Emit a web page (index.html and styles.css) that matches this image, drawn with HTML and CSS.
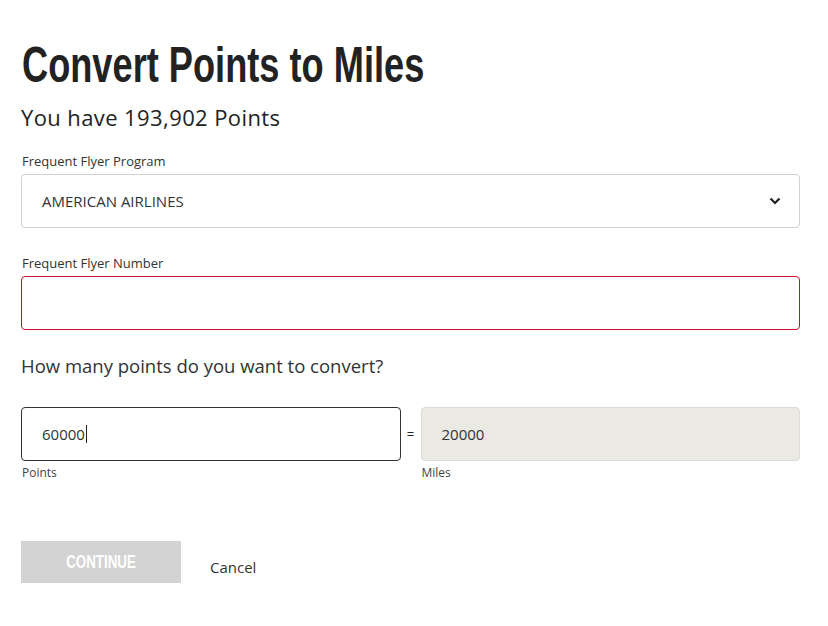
FILE: index.html
```html
<!DOCTYPE html>
<html lang="en">
<head>
    <meta charset="UTF-8">
    <meta name="viewport" content="width=device-width, initial-scale=1.0">
    <title>Convert Points to Miles</title>
    <link rel="stylesheet" href="styles.css">
</head>
<body>
    <div class="container">
        <h1><span>Convert Points to Miles</span></h1>
        <p class="balance">You have 193,902 Points</p>
        <form id="convert-form">
            <div class="form-group">
                <label for="program">Frequent Flyer Program</label>
                <div class="select-box">
                    <span>AMERICAN AIRLINES</span>
                    <svg width="12" height="8" viewBox="0 0 12 8"><path d="M1.5 1.5 L6 6 L10.5 1.5" fill="none" stroke="#222" stroke-width="2.2"/></svg>
                </div>
            </div>
            <div class="form-group">
                <label for="ff-number">Frequent Flyer Number</label>
                <input type="text" id="ff-number" class="field error">
            </div>
            <p class="question">How many points do you want to convert?</p>
            <div class="convert-row">
                <div class="convert-col">
                    <div class="field points"><span>60000</span><span class="caret"></span></div>
                    <span class="small-label">Points</span>
                </div>
                <span class="equals">=</span>
                <div class="convert-col">
                    <div class="field miles">20000</div>
                    <span class="small-label">Miles</span>
                </div>
            </div>
            <div class="actions">
                <button type="submit" disabled><span>CONTINUE</span></button>
                <a href="#" class="cancel">Cancel</a>
            </div>
        </form>
    </div>
</body>
</html>
```

FILE: styles.css
```css
body {
    font-family: "Open Sans", sans-serif;
    background-color: white;
    color: #222;
    margin: 0;
    padding: 0;
}
.container {
    padding: 35px 28px 0 21px;
}
h1 {
    font-family: "Liberation Sans", sans-serif;
    font-weight: bold;
    font-size: 50px;
    margin: 0 0 0 1px;
    line-height: 60px;
    color: #222;
    white-space: nowrap;
}
h1 span {
    display: inline-block;
    transform: scaleX(0.724);
    transform-origin: left center;
}
.balance {
    font-size: 22px;
    letter-spacing: 0.4px;
    margin: 9px 0 0 0;
    line-height: 26px;
}
.form-group {
    margin-top: 23px;
}
.form-group + .form-group {
    margin-top: 27px;
}
label {
    display: block;
    font-size: 13px;
    color: #333;
    margin: 0 0 5px 1px;
    line-height: 16px;
}
.select-box, .field {
    box-sizing: border-box;
    width: 100%;
    height: 54px;
    border: 1px solid #d0d0d0;
    border-radius: 4px;
    display: flex;
    align-items: center;
    padding: 0 20px;
    font-family: inherit;
    font-size: 15px;
    color: #333;
}
.select-box {
    justify-content: space-between;
    padding-right: 18px;
}
.field.error {
    border-color: #c8102e;
}
.question {
    font-size: 18.5px;
    color: #333;
    margin: 24px 0 0 0;
    line-height: 24px;
}
.convert-row {
    display: flex;
    align-items: flex-start;
    margin-top: 29px;
}
.convert-col {
    flex: 1;
}
.field.points {
    border-color: #333;
}
.caret {
    display: inline-block;
    width: 1px;
    height: 18px;
    background: #222;
    margin-left: 1px;
}
.field.miles {
    background: #eae9e2;
    border-color: #dddcd5;
}
.equals {
    width: 20px;
    text-align: center;
    font-size: 13px;
    line-height: 54px;
}
.small-label {
    display: block;
    font-size: 12px;
    color: #444;
    margin: 3px 0 0 1px;
}
.actions {
    display: flex;
    align-items: center;
    margin-top: 60px;
}
button {
    width: 160px;
    height: 42px;
    background-color: #d3d3d3;
    color: white;
    border: none;
    font-family: "Liberation Sans", sans-serif;
    font-weight: bold;
    font-size: 18px;
}
button span {
    display: inline-block;
    transform: scaleX(0.74);
}
.cancel {
    margin-left: 29px;
    margin-top: 10px;
    font-size: 15px;
    color: #333;
    text-decoration: none;
}
```
